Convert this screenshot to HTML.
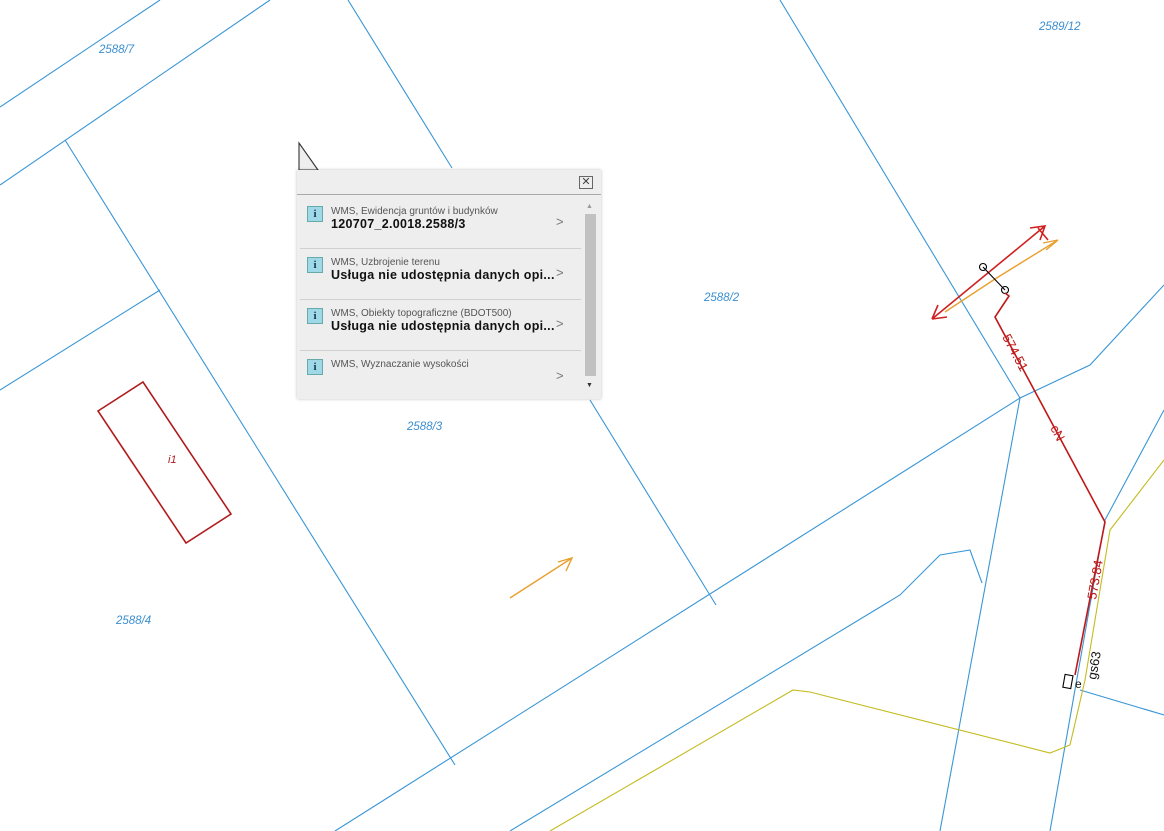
<!DOCTYPE html>
<html><head><meta charset="utf-8"><style>
body{margin:0;width:1164px;height:831px;overflow:hidden;background:#fff;font-family:"Liberation Sans",sans-serif;position:relative}
svg{position:absolute;left:0;top:0}
.pop{position:absolute;left:297px;top:170px;width:304px;height:229px;background:#eeeeee;box-shadow:0 0 3px rgba(0,0,0,.25)}
.hd{height:24px;border-bottom:1px solid #a9a9a9}
.x{position:absolute;left:282px;top:6px;width:12px;height:11px;border:1px solid #666;font-size:11px;line-height:10px;text-align:center;color:#444}
.row{position:absolute;left:3px;width:281px;height:50px;border-bottom:1px solid #d0d0d0}
.ic{position:absolute;left:7px;top:8px;width:14px;height:14px;background:#9fd8e6;border:1px solid #6aa;color:#135;font:bold 11px "Liberation Serif",serif;text-align:center;line-height:14px}
.t1{position:absolute;left:31px;top:8px;font-size:10px;color:#555;white-space:nowrap}
.t2{position:absolute;left:31px;top:19px;font-size:12.5px;font-weight:bold;color:#111;white-space:nowrap;letter-spacing:.3px}
.ar{position:absolute;left:256px;top:16px;color:#777;font-size:13px}
.sb{position:absolute;left:286px;top:30px;width:13px;height:192px}
.th{position:absolute;left:2px;top:14px;width:11px;height:162px;background:#c1c1c1}
.lbl{position:absolute;color:#3a8ed0;font-style:italic;font-size:11.5px}
</style></head><body>
<svg width="1164" height="831" fill="none" stroke-width="1.1">
<g stroke="#3a96d6">
<path d="M0 107L160 0M0 185L270 0M65 140L455 765M0 390L160 290M348 0L452 168M590 400L716 605M780 0L1020 398L1090 365L1164 285M1020 398L940 831M335 831L1020 398M510 831L900 595L940 555L970 550L982 583M1164 410L1105 520L1050 831M1080 690L1164 715"/>
</g>
<path d="M550 831L793 690L810 692L1050 753L1070 745L1085 680L1110 530L1164 460" stroke="#c4bb20"/>
<polygon points="98,411 143,382 231,514 186,543" stroke="#b01c1c" stroke-width="1.6"/>
<path d="M510 598L572 558M558 562L572 558L566 571" stroke="#e8a030" stroke-width="1.4"/>
<path d="M995 279L1058 240M1043 243L1058 240L1046 250M945 312L995 279" stroke="#e8a030" stroke-width="1.4"/>
<path d="M932 319L1045 226M1030 228L1045 226L1040 240M932 319L947 317M932 319L938 305M1038 228L1048 240" stroke="#d02020" stroke-width="1.6"/>
<path d="M983 267L1005 290" stroke="#000"/>
<circle cx="983" cy="267" r="3.5" stroke="#000"/><circle cx="1005" cy="290" r="3.5" stroke="#000"/>
<path d="M1005 293L1009 296L995 317L1105 522L1075 675" stroke="#c01818" stroke-width="1.6"/>
<rect x="1064" y="675" width="8" height="13" stroke="#000" transform="rotate(10 1068 681)"/>
<text x="168" y="463" fill="#b01c1c" font-size="11" font-style="italic" font-family="Liberation Sans" stroke="none">i1</text>
<text transform="translate(1002 337) rotate(62)" fill="#c01818" font-size="13" font-family="Liberation Sans" stroke="none">574.51</text>
<text transform="translate(1050 428) rotate(62)" fill="#c01818" font-size="13" font-family="Liberation Sans" stroke="none">cN</text>
<text transform="translate(1096 600) rotate(-80)" fill="#c01818" font-size="13" font-family="Liberation Sans" stroke="none">573.84</text>
<text transform="translate(1096 680) rotate(-80)" fill="#111" font-size="13" font-family="Liberation Sans" stroke="none">gs63</text>
<text x="1075" y="688" fill="#111" font-size="12" font-family="Liberation Sans" stroke="none">e</text>
<path d="M299 143L299 170L318 170Z" fill="#eee" stroke="#333"/>
</svg>
<div class="lbl" style="left:99px;top:44px">2588/7</div>
<div class="lbl" style="left:1039px;top:21px">2589/12</div>
<div class="lbl" style="left:704px;top:292px">2588/2</div>
<div class="lbl" style="left:407px;top:421px">2588/3</div>
<div class="lbl" style="left:116px;top:615px">2588/4</div>
<div class="pop">
<div class="hd"></div><div class="x">✕</div>
<div class="row" style="top:28px"><div class="ic">i</div><div class="t1">WMS, Ewidencja gruntów i budynków</div><div class="t2">120707_2.0018.2588/3</div><div class="ar">&gt;</div></div>
<div class="row" style="top:79px"><div class="ic">i</div><div class="t1">WMS, Uzbrojenie terenu</div><div class="t2">Usługa nie udostępnia danych opi...</div><div class="ar">&gt;</div></div>
<div class="row" style="top:130px"><div class="ic">i</div><div class="t1">WMS, Obiekty topograficzne (BDOT500)</div><div class="t2">Usługa nie udostępnia danych opi...</div><div class="ar">&gt;</div></div>
<div class="row" style="top:181px;border:none"><div class="ic">i</div><div class="t1">WMS, Wyznaczanie wysokości</div><div class="ar" style="top:17px">&gt;</div></div>
<div class="sb"><div style="position:absolute;left:3px;top:3px;font-size:7px;color:#999">▲</div><div class="th"></div><div style="position:absolute;left:3px;top:182px;font-size:7px;color:#333">▼</div></div>
</div>
</body></html>
